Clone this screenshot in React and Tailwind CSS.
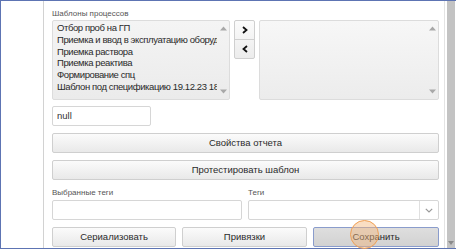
import React from 'react';

const TEMPLATES = [
  'Отбор проб на ГП',
  'Приемка и ввод в эксплуатацию оборудования',
  'Приемка раствора',
  'Приемка реактива',
  'Формирование спц',
  'Шаблон под спецификацию 19.12.23 18:40',
];

function ScrollTrack() {
  return (
    <div className="w-[12px] shrink-0 flex flex-col items-center justify-between py-[5px]">
      <svg width="7" height="5" viewBox="0 0 7 5"><polygon points="3.5,0.5 7,4.5 0,4.5" fill="#a8a8a8" /></svg>
      <svg width="7" height="5" viewBox="0 0 7 5"><polygon points="0,0.5 7,0.5 3.5,4.5" fill="#a8a8a8" /></svg>
    </div>
  );
}

function Button({ children, className = '' }) {
  return (
    <button className={`h-[20px] rounded-[2px] border border-[#cfcfcf] bg-gradient-to-b from-[#fbfbfb] to-[#e9e9e9] text-[9.5px] text-[#2a2a2a] flex items-center justify-center ${className}`}>
      {children}
    </button>
  );
}

export default function App() {
  return (
    <div className="relative w-[456px] h-[251px] bg-white overflow-hidden font-['Liberation_Sans',Arial,sans-serif]">
      <div className="flex h-[249px] border-t border-l border-b border-[#5d74b3]">
        {/* left gutter */}
        <div className="w-[43px] shrink-0 border-r border-[#d2d2d2]" />

        {/* content */}
        <div className="flex-1 flex flex-col pl-[8px] pr-[5px]">
          <div className="text-[8px] text-[#555] leading-none pt-[9px] h-[19px]">Шаблоны процессов</div>

          <div className="flex h-[80px] gap-[4px]">
            <div className="w-[178px] shrink-0 flex rounded-[2px] border border-[#dcdcdc] bg-gradient-to-b from-[#f4f4f4] to-[#ebebeb]">
              <div className="flex-1 overflow-hidden pl-[4px] pt-[1px]">
                {TEMPLATES.map((t) => (
                  <div key={t} className="text-[9.5px] leading-[11.8px] tracking-[-0.4px] text-[#2a2a2a] whitespace-nowrap">{t}</div>
                ))}
              </div>
              <ScrollTrack />
            </div>

            <div className="w-[21px] shrink-0 flex flex-col h-[39px] rounded-[2px] border border-[#cfcfcf] bg-gradient-to-b from-[#fbfbfb] to-[#ececec]">
              <div className="flex-1 flex items-center justify-center border-b border-[#d0d0d0]">
                <svg width="6" height="8" viewBox="0 0 6 8"><polyline points="1,1 4.5,4 1,7" fill="none" stroke="#111" strokeWidth="1.8" /></svg>
              </div>
              <div className="flex-1 flex items-center justify-center">
                <svg width="6" height="8" viewBox="0 0 6 8"><polyline points="5,1 1.5,4 5,7" fill="none" stroke="#111" strokeWidth="1.8" /></svg>
              </div>
            </div>

            <div className="flex-1 flex rounded-[2px] border border-[#dcdcdc] bg-gradient-to-b from-[#f7f7f7] to-[#ececec]">
              <div className="flex-1" />
              <ScrollTrack />
            </div>
          </div>

          <div className="mt-[6px] w-[99px] h-[20px] rounded-[2px] border border-[#d6d6d6] bg-white text-[9.5px] text-[#333] pl-[4px] flex items-center">null</div>

          <Button className="mt-[7px] h-[19px]">Свойства отчета</Button>
          <Button className="mt-[7px] h-[19px]">Протестировать шаблон</Button>

          <div className="flex gap-[6px] mt-[8px]">
            <div className="w-[190px] shrink-0">
              <div className="text-[8px] text-[#555] leading-none h-[12px] pt-[1px]">Выбранные теги</div>
              <div className="h-[20px] rounded-[2px] border border-[#d6d6d6] bg-white" />
            </div>
            <div className="flex-1">
              <div className="text-[8px] text-[#555] leading-none h-[12px] pt-[1px]">Теги</div>
              <div className="h-[20px] rounded-[2px] border border-[#d6d6d6] bg-white flex justify-end">
                <div className="w-[19px] border-l border-[#e0e0e0] flex items-center justify-center">
                  <svg width="8" height="5" viewBox="0 0 8 5"><polyline points="0.8,0.8 4,4 7.2,0.8" fill="none" stroke="#999" strokeWidth="1.2" /></svg>
                </div>
              </div>
            </div>
          </div>

          <div className="flex gap-[6px] mt-[7px]">
            <Button className="w-[124px]">Сериализовать</Button>
            <Button className="w-[125px]">Привязки</Button>
            <button className="flex-1 h-[20px] rounded-[2px] border border-[#8a9ccc] bg-gradient-to-b from-[#dedede] to-[#d2d2d2] text-[9.5px] text-[#2a2a2a] flex items-center justify-center">Сохранить</button>
          </div>
        </div>

        {/* window scrollbar */}
        <div className="w-[12px] shrink-0 flex border-l border-[#e4e4e4] pl-[2px]">
          <div className="w-[8px] bg-[#c3c3c3] flex flex-col justify-end items-center pb-[3px]">
            <svg width="6" height="4" viewBox="0 0 6 4"><polygon points="0,0 6,0 3,4" fill="#8a8a8a" /></svg>
          </div>
        </div>
      </div>

      {/* click highlight */}
      <div className="absolute left-[350px] top-[220px] w-[29px] h-[29px] rounded-full border-[1.5px] border-[#f0a055] bg-[#f5b57a]/45" />
    </div>
  );
}
